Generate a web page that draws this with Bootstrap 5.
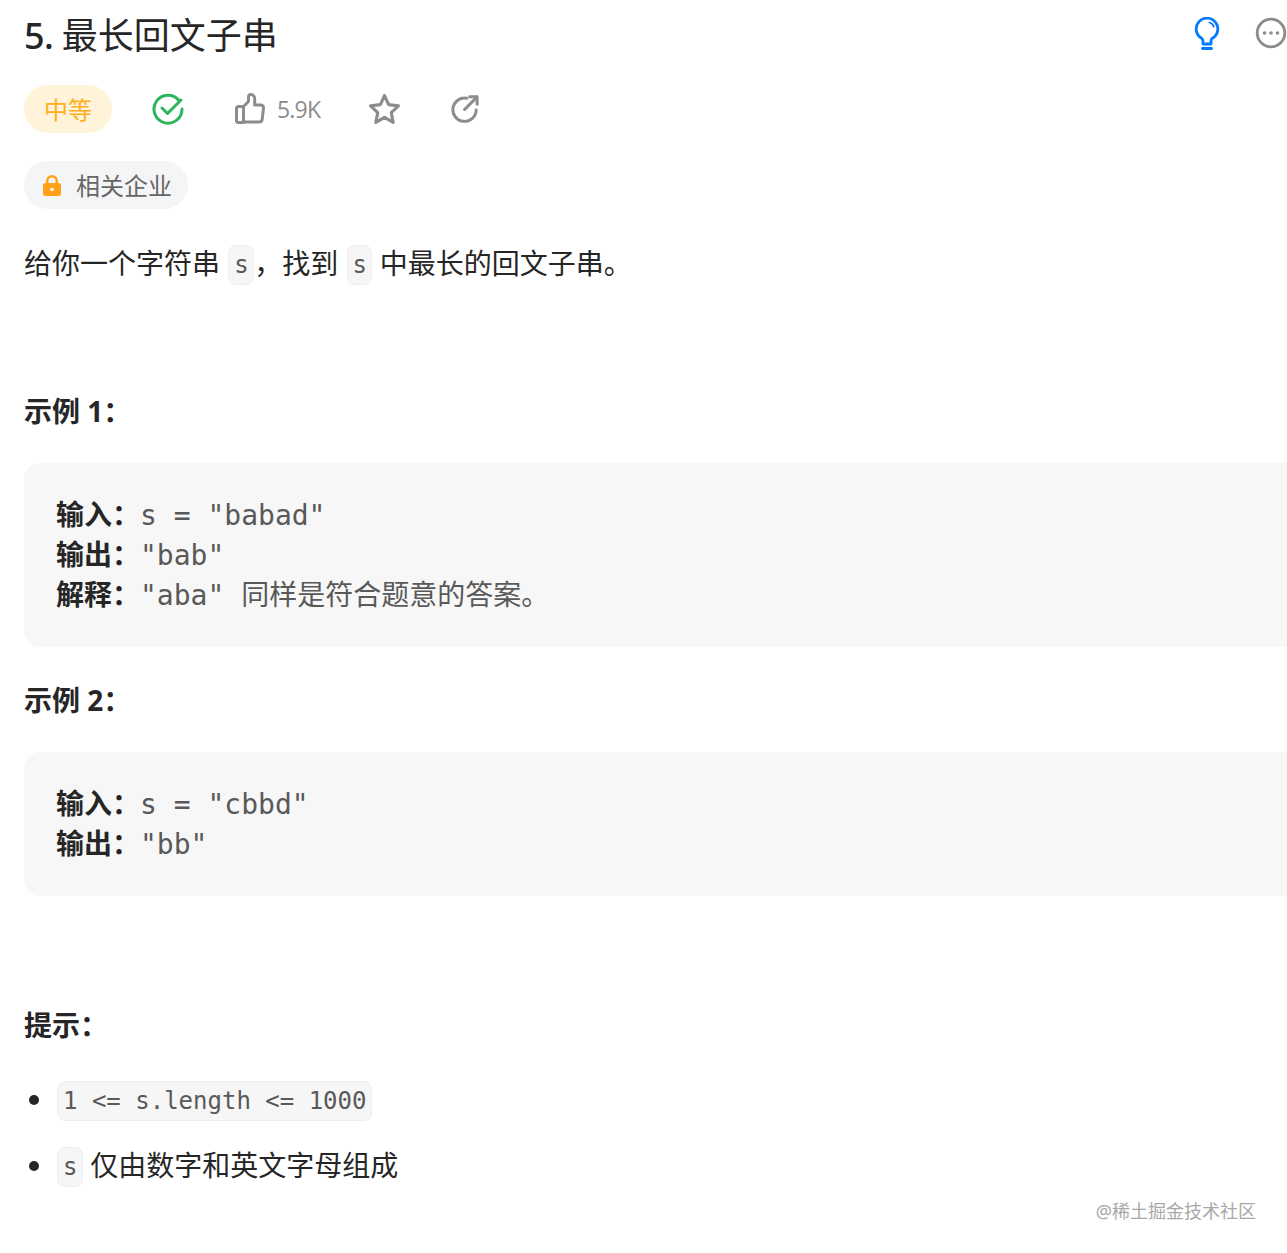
<!DOCTYPE html>
<html lang="zh">
<head>
<meta charset="utf-8">
<title>最长回文子串</title>
<link href="https://cdn.jsdelivr.net/npm/bootstrap@5.3.0/dist/css/bootstrap.min.css" rel="stylesheet">
<style>
html,body{overflow:hidden;height:1253px;background:#fff}
body{font-family:"Noto Sans","Noto Sans CJK SC",sans-serif;color:#262626;position:relative}
.sheet{width:1320px;padding:0 0 0 24px}
.title-row{height:72px;padding-right:33px}
.q-title{font-size:36px;font-weight:400;line-height:72px;margin:0;color:#262626}
.q-num{letter-spacing:-.7px;font-weight:500}
.top-ics{column-gap:35px;margin-bottom:6px}
.tag-row{margin-top:13px;height:48px}
.level{width:88px;height:48px;border-radius:24px;background:#fff3d9;color:#ffae1f;font-size:24px;line-height:50px;text-align:center}
.ok-ic{margin-left:40px}
.like-ic{margin-left:51px;margin-top:-2px}
.like-num{font-size:23px;color:#8c8c8c;margin-left:12px;letter-spacing:-.8px;font-family:"Open Sans","Noto Sans",sans-serif}
.star-ic{margin-left:49px}
.share-ic{margin-left:51px}
.corp{margin-top:28px;width:164px;height:48px;border-radius:24px;background:#f4f5f6;color:#666;font-size:24px;line-height:48px;padding-left:16px;gap:12px}
.corp span{padding-top:2px}
.desc{font-size:28px;line-height:48px;margin:30px 0 0}
.ic{display:inline-block;background:#f6f6f6;border:1px solid #eee;border-radius:8px;font-family:"DejaVu Sans Mono",monospace;font-size:24px;color:#595959;line-height:38px;padding:0 4.5px 0 5px;margin-left:1px;vertical-align:1px}
.sub{font-size:28px;font-weight:700;line-height:40px;margin:0;color:#262626}
.s1{margin-top:104px}
.box{margin:32px 0 0;background:#f7f7f7;border-radius:16px;padding:30px 32px 34px;font-family:"DejaVu Sans Mono",monospace;font-size:28px;line-height:40px;color:#595959;width:1290px;white-space:pre}
.code-ln{display:flex;height:40px;align-items:baseline}
.box b{font-family:"Noto Sans CJK SC",sans-serif;font-weight:700;color:#262626}
.box .cj{font-family:"Noto Sans CJK SC",sans-serif}
.s2{margin-top:33px}
.s3{margin-top:109px}
.tips{list-style:disc;margin:30px 0 0;padding:0 0 0 32px;font-size:28px}
.tips li{height:48px;line-height:48px;margin-bottom:18px}
.mark-wm{position:absolute;right:31px;top:1198px;font-size:18px;color:#a8a8a8;line-height:26px}
</style>
</head>
<body>
<div class="sheet">
  <div class="title-row d-flex justify-content-between align-items-center">
    <h1 class="q-title"><span class="q-num">5. </span>最长回文子串</h1>
    <div class="top-ics d-flex align-items-center">
      <svg width="26" height="33" viewBox="0 0 26 33" fill="none" stroke="#007aff" stroke-width="2.800" stroke-linecap="round" stroke-linejoin="round"><path d="M9 27v-2.500c0-1.500-.5-2.300-1-3A10.800 10.800 0 1 1 18 21.500c-.5.700-1 1.500-1 3V27z"/><path d="M15.500 5.500c2.300.6 3.600 2 4.200 4.200" stroke-width="1.800"/><path d="M8.500 31.500h9"/></svg>
      <svg width="32" height="32" viewBox="0 0 32 32" fill="none"><circle cx="16" cy="16" r="13.800" stroke="#8c8c8c" stroke-width="2.800"/><circle cx="9.500" cy="16" r="1.800" fill="#8c8c8c"/><circle cx="16" cy="16" r="1.800" fill="#8c8c8c"/><circle cx="22.500" cy="16" r="1.800" fill="#8c8c8c"/></svg>
    </div>
  </div>
  <div class="tag-row d-flex align-items-center">
    <div class="level">中等</div>
    <svg class="ok-ic" width="32" height="32" viewBox="0 0 32 32" fill="none" stroke="#2db55d" stroke-width="3" stroke-linecap="round" stroke-linejoin="round"><path d="M27 7.500A14 14 0 1 0 30 16"/><path d="M10 15l5.500 5.500L29 7"/></svg>
    <svg class="like-ic" width="30" height="31" viewBox="0 0 30 31" fill="none" stroke="#8c8c8c" stroke-width="3" stroke-linecap="round" stroke-linejoin="round"><path d="M8.500 13.500H3.500a2 2 0 0 0-2 2V27.500a2 2 0 0 0 2 2h5z"/><path d="M8.500 13.500 13.500 8.500V4c0-1.500 1-2.500 2.400-2.500 2.400 0 3.800 2 3.800 4.500v6h5.800c1.800 0 3.200 1.300 3 3.200l-1.300 11c-.2 1.600-1.300 2.800-3 2.800H8.500"/></svg>
    <span class="like-num">5.9K</span>
    <svg class="star-ic" width="31" height="31" viewBox="1 1 30 30" fill="none" stroke="#8c8c8c" stroke-width="3" stroke-linejoin="round"><path d="M16 2.500l4 8.800 9.500 1.200-7 6.500 1.900 9.500-8.400-4.800-8.400 4.800 1.900-9.500-7-6.500 9.500-1.200z"/></svg>
    <svg class="share-ic" width="28" height="28" viewBox="0 0 30 30" fill="none" stroke="#8c8c8c" stroke-width="3.200" stroke-linecap="round" stroke-linejoin="round"><path d="M17 3.500A12.500 12.500 0 1 0 27 16"/><path d="M14.500 15.500 27.500 2.500"/><path d="M20 2h8v8"/></svg>
  </div>
  <div class="corp d-flex align-items-center">
    <svg width="24" height="24" viewBox="0 0 24 24"><path d="M6 11V8a6 6 0 0 1 12 0v3h-2.400V8a3.600 3.600 0 0 0-7.200 0v3z" fill="#ffa116"/><rect x="3" y="10" width="18" height="13" rx="2.500" fill="#ffa116"/><circle cx="12" cy="16.500" r="1.800" fill="#fff"/></svg>
    <span>相关企业</span>
  </div>
  <p class="desc">给你一个字符串 <code class="ic">s</code>，找到 <code class="ic">s</code> 中最长的回文子串。</p>
  <p class="sub s1">示例 1：</p>
  <pre class="box"><span class="code-ln"><b>输入：</b>s = "babad"</span><span class="code-ln"><b>输出：</b>"bab"</span><span class="code-ln"><b>解释：</b>"aba" <span class="cj">同样是符合题意的答案。</span></span></pre>
  <p class="sub s2">示例 2：</p>
  <pre class="box"><span class="code-ln"><b>输入：</b>s = "cbbd"</span><span class="code-ln"><b>输出：</b>"bb"</span></pre>
  <p class="sub s3">提示：</p>
  <ul class="tips">
    <li><code class="ic">1 &lt;= s.length &lt;= 1000</code></li>
    <li><code class="ic">s</code> 仅由数字和英文字母组成</li>
  </ul>
</div>
<div class="mark-wm">@稀土掘金技术社区</div>
</body>
</html>
